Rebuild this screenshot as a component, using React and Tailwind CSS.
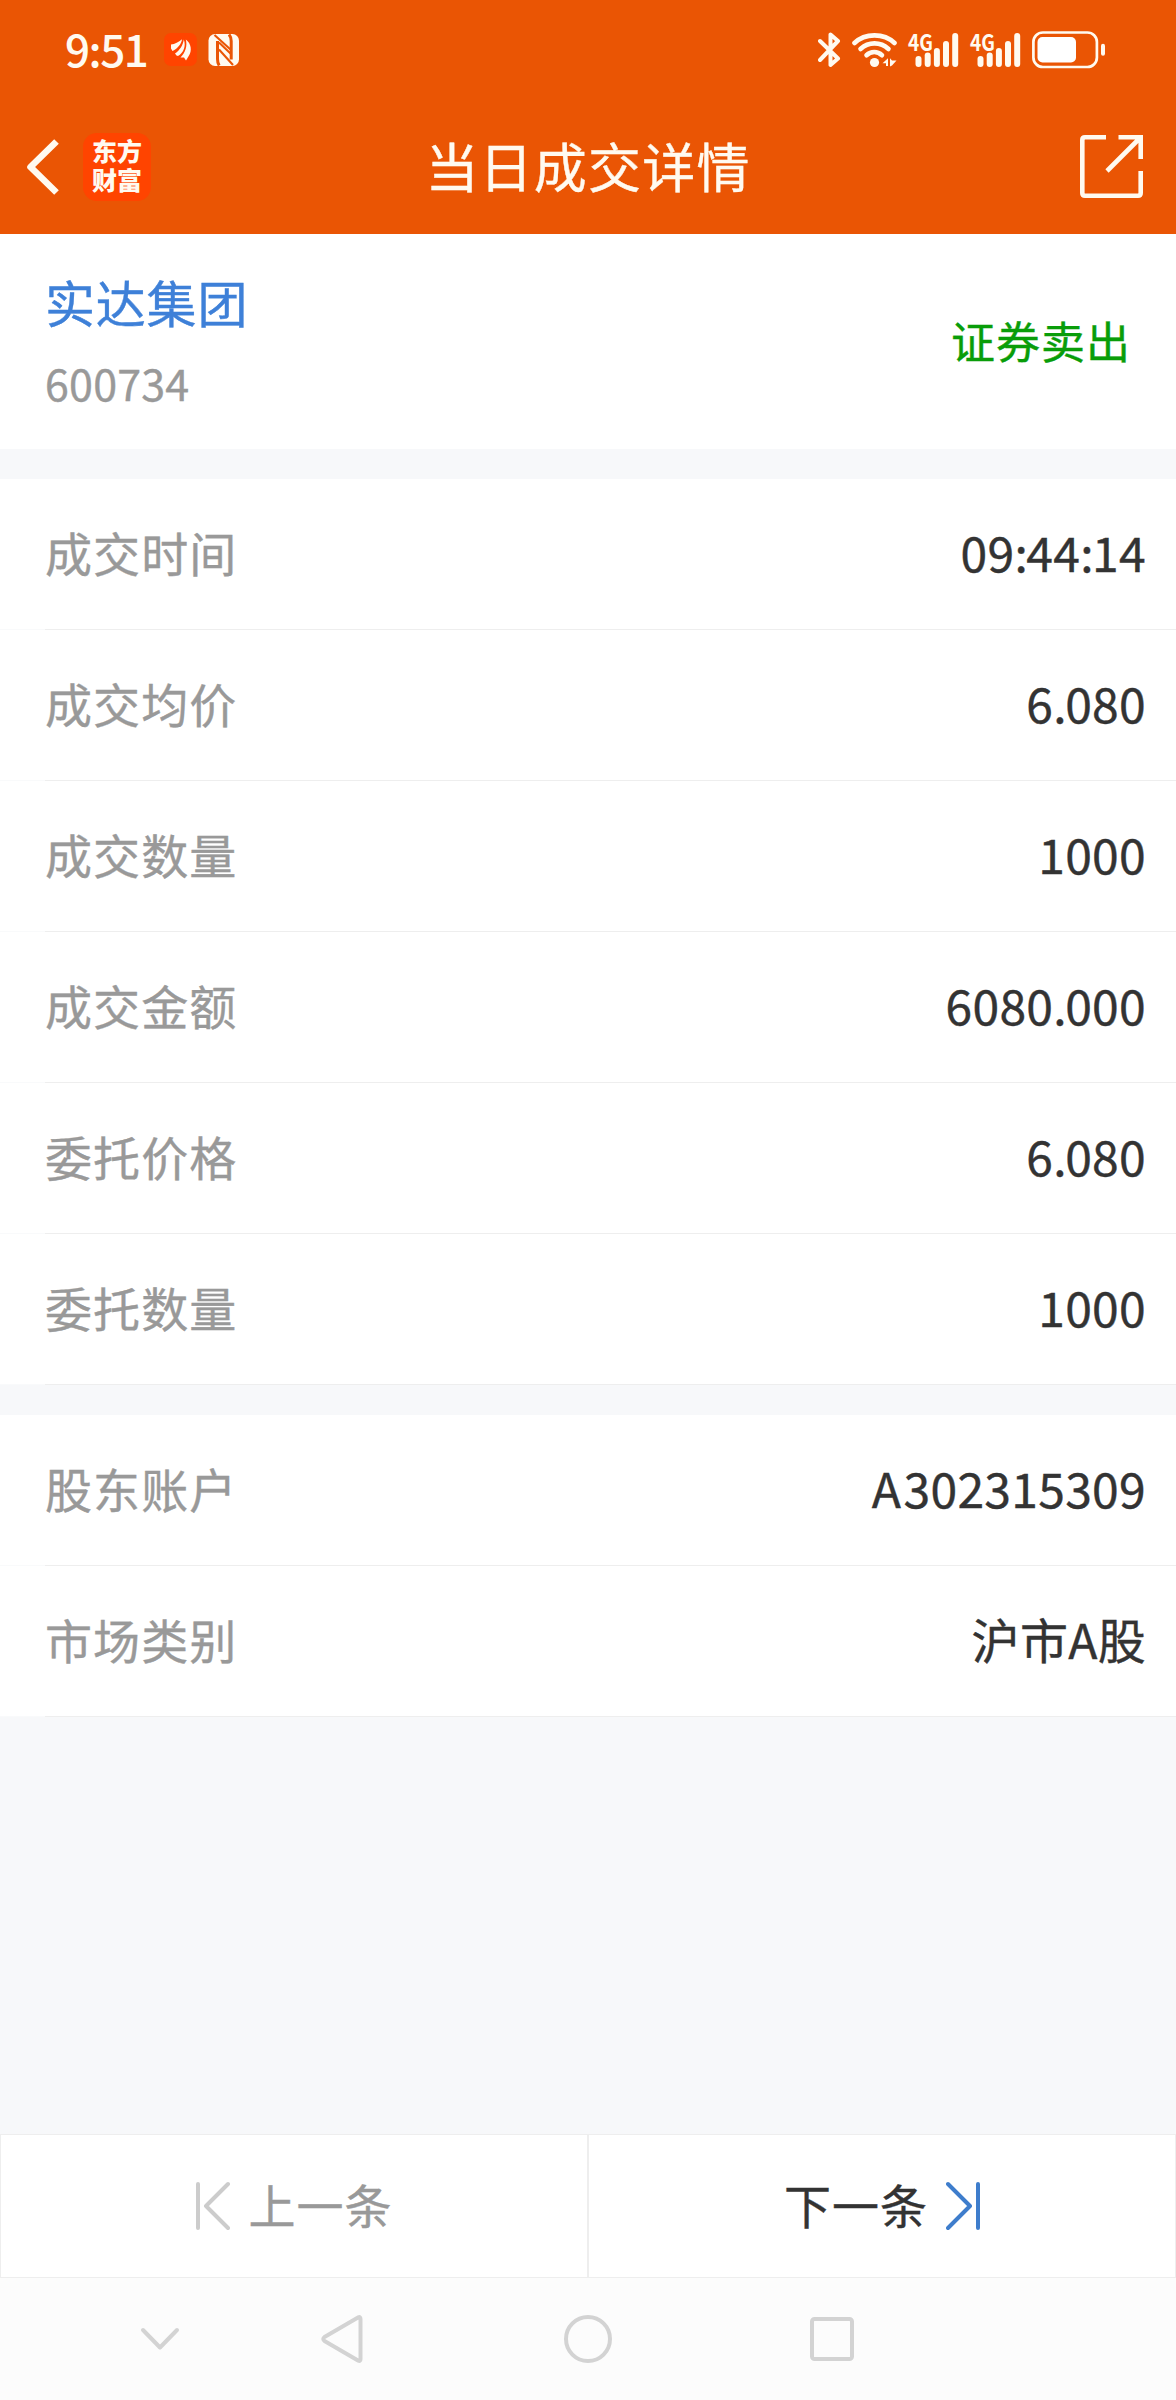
import React from "react";

const FONT = "font-['Noto_Sans_CJK_SC','Noto_Sans',sans-serif]";

const tradeRows = [
  ["成交时间", "09:44:14"],
  ["成交均价", "6.080"],
  ["成交数量", "1000"],
  ["成交金额", "6080.000"],
  ["委托价格", "6.080"],
  ["委托数量", "1000"],
];

const accountRows = [
  ["股东账户", "A302315309"],
  ["市场类别", "沪市A股"],
];

function AppBadge() {
  return (
    <svg className="ml-[21px] h-[33px] w-[33px]" viewBox="0 0 33 33" fill="none">
      <rect width="33" height="33" rx="7" fill="#ff4400" />
      <g fill="#fffaf0">
        <path d="M7 11.500C11 11 14.500 9 18 6.200C17.500 10.500 14 15.500 8.500 18L7 15.500Z" />
        <path d="M11 20.500C16 17 18.800 12.500 19.800 6.500C22.300 13 19.500 20 14 23L12.500 22.500Z" />
        <path d="M16.500 24.500C21.500 19.500 23.500 13 21.800 6.500C27.500 10.500 28 18 25 22.500L22 27.500L20 24.500Z" />
      </g>
    </svg>
  );
}

function NfcIcon() {
  return (
    <svg className="ml-[11px] h-8 w-8" viewBox="0 0 32 32" fill="none">
      <rect x="0.500" width="30.500" height="32" rx="6.500" fill="#fffaf0" />
      <g stroke="#ea5504">
        <path d="M6.500 1L22.500 15.500M11 8.500L22.500 19.500M11 15.500L25 31" strokeWidth="2.100" />
        <path d="M9.500 7V25Q9.500 29 11.200 31.500" strokeWidth="3" />
        <path d="M21 0.500Q23.200 3 23.200 7V25.500" strokeWidth="3" />
      </g>
    </svg>
  );
}

function BluetoothIcon() {
  return (
    <svg className="h-[36px] w-[23px]" viewBox="0 0 23 36" fill="none" stroke="#fffaf0" strokeWidth="4" strokeLinejoin="round" strokeLinecap="round">
      <path d="M2 9L20 26.500L12.500 33V21.500M2 28L20 9L12.500 2.500V15.500" />
    </svg>
  );
}

function WifiIcon() {
  return (
    <svg className="ml-[11px] h-[36px] w-[45px]" viewBox="0 0 45 36" fill="none">
      <g stroke="#fffaf0" strokeWidth="4.600" strokeLinecap="round">
        <path d="M2.500 11C13 0.800 32 0.800 42.500 11" />
        <path d="M8.500 17C16.500 9.500 28.500 9.500 36.500 17" />
        <path d="M14.500 23.200C19 19 25.500 19 30 23.200" />
      </g>
      <circle cx="22.500" cy="30.500" r="4.600" fill="#fffaf0" />
      <path d="M30.500 31.200L36 26.200V34H34V31.200ZM38 26.200L40 28.500H44.500L40 33.500L38 34.500Z" fill="#fffaf0" />
    </svg>
  );
}

function SignalIcon() {
  return (
    <svg className="ml-[11px] h-[36px] w-[51px] overflow-visible" viewBox="0 0 51 36" fill="#fffaf0">
      <text x="0" y="18.500" fontSize="23" fontWeight="700" textLength="25" lengthAdjust="spacingAndGlyphs" fontFamily="Noto Sans CJK SC, sans-serif">4G</text>
      <rect x="7.500" y="24" width="6" height="11" rx="3" />
      <rect x="16.700" y="20.500" width="6" height="14.500" rx="3" />
      <rect x="25.900" y="16" width="6" height="19" rx="3" />
      <rect x="35" y="9" width="6" height="26" rx="3" />
      <rect x="44.200" y="1" width="6" height="34" rx="3" />
    </svg>
  );
}

function BatteryIcon() {
  return (
    <svg className="ml-[11px] h-[38px] w-[74px]" viewBox="0 0 74 38" fill="none">
      <rect x="1.400" y="1.500" width="63.500" height="34.500" rx="9.500" stroke="#fffaf0" strokeWidth="2.700" />
      <rect x="5.500" y="6" width="38.500" height="25.500" rx="5" fill="#fff" />
      <rect x="69" y="12.800" width="4" height="12" rx="2" fill="#fffaf0" />
    </svg>
  );
}

function StatusBar() {
  return (
    <div className="flex h-[99px] items-center pl-[65px] pr-[70px]">
      <span className="w-[78px] pb-[3px] text-[44px] leading-none font-medium tracking-[-1.500px] whitespace-nowrap">9:51</span>
      <AppBadge />
      <NfcIcon />
      <div className="flex-1" />
      <BluetoothIcon />
      <WifiIcon />
      <SignalIcon />
      <SignalIcon />
      <BatteryIcon />
    </div>
  );
}

function TitleBar() {
  return (
    <div className="grid h-[135px] grid-cols-[1fr_auto_1fr] items-center">
      <div className="flex items-center pl-[27px]">
        <svg className="h-[56px] w-[33px]" viewBox="0 0 33 56" fill="none">
          <path d="M29.500 2.500L3.500 28L29.500 53.500" stroke="#fffaf0" strokeWidth="6.600" strokeLinejoin="round" />
        </svg>
        <div className="ml-[23px] h-[68px] w-[68px] rounded-[14px] bg-[#ff4400] pt-[3px] text-center text-[25px] leading-[29px] font-black">
          东方
          <br />
          财富
        </div>
      </div>
      <h1 className="pb-[3px] text-[53px] leading-none font-normal tracking-[1.200px] [-webkit-text-stroke:0.4px]">当日成交详情</h1>
      <div className="flex justify-end pr-[33px]">
        <svg className="h-[63px] w-[63px]" viewBox="0 0 63 63" fill="none" stroke="#fffaf0" strokeWidth="4.600">
          <path d="M26 2.300H5Q2.300 2.300 2.300 5V58Q2.300 60.700 5 60.700H58Q60.700 60.700 60.700 58V36" />
          <path d="M38.500 2.300H60.700V24M60 3L27 36" />
        </svg>
      </div>
    </div>
  );
}

function Row({ label, value }) {
  return (
    <div className="bg-[linear-gradient(to_right,#f9fafb_45px,#eeeeee_45px)] pb-px">
      <div className="flex h-[150px] items-center justify-between bg-white pr-[30px] pb-[6px] pl-[45px] leading-none [-webkit-text-stroke:0.4px]">
        <span className="text-[47px] tracking-[1.100px] text-[#999]">{label}</span>
        <span className="pb-px text-[48px] tracking-[0.300px] text-[#333]">
          {value.split(/([:.]|^A)/).map((part, i) => {
            if (part === ":" || part === ".") {
              return <span key={i} className="tracking-[-1.500px]">{part}</span>;
            }
            if (part === "A") {
              return <span key={i} className="tracking-[2.500px]">{part}</span>;
            }
            return part;
          })}
        </span>
      </div>
    </div>
  );
}

function RowGroup({ rows }) {
  return (
    <section className="mt-[30px]">
      {rows.map(([label, value]) => (
        <Row key={label} label={label} value={value} />
      ))}
    </section>
  );
}

function Pager() {
  return (
    <div className="grid h-[144px] grid-cols-2 text-[47px] leading-none tracking-[1px] [-webkit-text-stroke:0.4px]">
      <button className="flex items-center justify-center border border-[#eee] bg-white text-[#999]">
        <svg className="mr-[19px] h-[54px] w-[34px]" viewBox="0 -3 34 54" fill="none" stroke="#ccc" strokeWidth="4" strokeLinecap="round" strokeLinejoin="round">
          <path d="M2 2V46M32 2L10 24L32 46" />
        </svg>
        <span className="pb-[5px]">上一条</span>
      </button>
      <button className="flex items-center justify-center border border-[#eee] bg-white text-[#333]">
        <span className="pb-[5px]">下一条</span>
        <svg className="ml-[18px] h-[54px] w-[34px]" viewBox="0 -3 34 54" fill="none" stroke="#3e7dcc" strokeWidth="4" strokeLinecap="round" strokeLinejoin="round">
          <path d="M32 2V46M2 2L24 24L2 46" />
        </svg>
      </button>
    </div>
  );
}

function SystemNav() {
  return (
    <nav className="flex h-[122px] items-center bg-[#fcfcfc] pl-[140px]">
      <svg className="h-[24px] w-[40px]" viewBox="0 0 40 24" fill="none" stroke="#d3d3d3" strokeWidth="4" strokeLinecap="round" strokeLinejoin="round">
        <path d="M3 3L20 20.500L37 3" />
      </svg>
      <svg className="ml-[140px] h-[50px] w-[44px]" viewBox="0 0 44 50" fill="none" stroke="#d3d3d3" strokeWidth="4" strokeLinejoin="round">
        <path d="M38 3.500Q40.500 2 40.500 5V45Q40.500 48 38 46.500L4.500 27Q2 25 4.500 23Z" />
      </svg>
      <svg className="ml-[199px] h-[50px] w-[50px]" viewBox="0 0 50 50" fill="none" stroke="#d3d3d3" strokeWidth="4">
        <circle cx="25" cy="25" r="22" />
      </svg>
      <svg className="ml-[196px] h-[46px] w-[46px]" viewBox="0 0 46 46" fill="none" stroke="#d3d3d3" strokeWidth="4">
        <rect x="3" y="3" width="40" height="40" rx="2.500" />
      </svg>
    </nav>
  );
}

export default function App() {
  return (
    <div className={`flex h-[2400px] w-[1176px] flex-col overflow-hidden bg-[#f7f8fa] ${FONT}`}>
      <header className="bg-[#ea5504] text-[#fffaf0]">
        <StatusBar />
        <TitleBar />
      </header>
      <section className="flex h-[215px] items-center justify-between bg-white pr-[45px] pl-[45px] [-webkit-text-stroke:0.4px]">
        <div className="flex flex-col">
          <span className="text-[50px] leading-[80px] tracking-[0.800px] text-[#3e80d8]">实达集团</span>
          <span className="pt-px text-[43px] leading-[80px] tracking-[0.200px] text-[#999]">600734</span>
        </div>
        <span className="pb-[4px] text-[44px] leading-none tracking-[1px] text-[#099d09]">证券卖出</span>
      </section>
      <RowGroup rows={tradeRows} />
      <RowGroup rows={accountRows} />
      <div className="flex-1" />
      <Pager />
      <SystemNav />
    </div>
  );
}
